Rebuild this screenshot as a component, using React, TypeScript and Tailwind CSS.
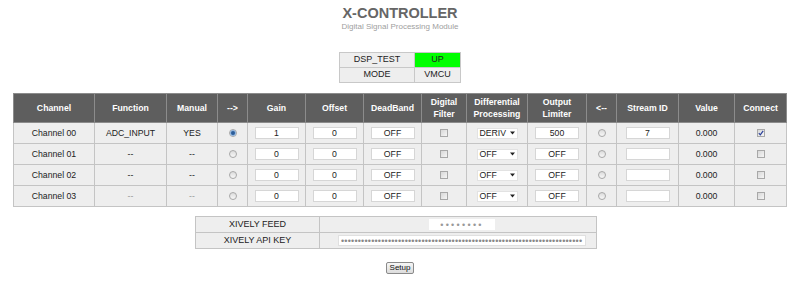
import React from 'react'

const FONT = "font-['Liberation_Sans',Arial,sans-serif]"

const cols = [81, 72, 51, 30, 58, 58, 58, 45, 61, 59, 30, 62, 56, 52]

const headers: React.ReactNode[] = [
  'Channel',
  'Function',
  'Manual',
  '-->',
  'Gain',
  'Offset',
  'DeadBand',
  <>Digital<br />Filter</>,
  <>Differential<br />Processing</>,
  <>Output<br />Limiter</>,
  '<--',
  'Stream ID',
  'Value',
  'Connect',
]

interface Channel {
  name: string
  fn: string
  manual: string
  selected: boolean
  gain: string
  offset: string
  deadband: string
  diff: string
  limiter: string
  stream: string
  value: string
  connect: boolean
  dim?: boolean
}

const channels: Channel[] = [
  { name: 'Channel 00', fn: 'ADC_INPUT', manual: 'YES', selected: true, gain: '1', offset: '0', deadband: 'OFF', diff: 'DERIV', limiter: '500', stream: '7', value: '0.000', connect: true },
  { name: 'Channel 01', fn: '--', manual: '--', selected: false, gain: '0', offset: '0', deadband: 'OFF', diff: 'OFF', limiter: 'OFF', stream: '', value: '0.000', connect: false },
  { name: 'Channel 02', fn: '--', manual: '--', selected: false, gain: '0', offset: '0', deadband: 'OFF', diff: 'OFF', limiter: 'OFF', stream: '', value: '0.000', connect: false },
  { name: 'Channel 03', fn: '--', manual: '--', selected: false, gain: '0', offset: '0', deadband: 'OFF', diff: 'OFF', limiter: 'OFF', stream: '', value: '0.000', connect: false, dim: true },
]

function Radio({ checked }: { checked?: boolean }) {
  return (
    <span className="inline-flex h-[8px] w-[8px] items-center justify-center rounded-full border border-[#a8a8a8] bg-gradient-to-b from-[#dcdcdc] to-[#f8f8f8] align-middle">
      {checked && <span className="h-[4px] w-[4px] rounded-full bg-[#2c5d9a] shadow-[0_0_0_1px_#8fb4de]" />}
    </span>
  )
}

function Check({ checked }: { checked?: boolean }) {
  return (
    <span className="inline-flex h-[8px] w-[8px] items-center justify-center border border-[#a8a8a8] bg-gradient-to-br from-[#d8d8d8] to-[#f6f6f6] align-middle">
      {checked && (
        <svg width="6" height="6" viewBox="0 0 6 6">
          <path d="M0.8 3.2 L2.3 4.8 L5.2 0.8" fill="none" stroke="#2a3f9a" strokeWidth="1.2" />
        </svg>
      )}
    </span>
  )
}

function Field({ value }: { value: string }) {
  return (
    <input
      readOnly
      value={value}
      className="mx-auto block h-[12px] w-[44px] border border-[#d6d6d6] bg-white p-0 text-center text-[8.7px] leading-none text-[#222] outline-none"
    />
  )
}

function Select({ value }: { value: string }) {
  return (
    <span className="mx-auto flex h-[11px] w-[41px] items-center gap-[2px] border border-[#e2e2e2] bg-white pl-[2px] pr-[2px]">
      <span className="flex-1 whitespace-nowrap text-left text-[8.7px] leading-none text-[#222]">{value}</span>
      <svg width="5" height="4" viewBox="0 0 5 4" className="shrink-0">
        <path d="M0 0.5 H5 L2.5 3.5 Z" fill="#222" />
      </svg>
    </span>
  )
}

const td = 'border border-[#c4c4c4] p-0 text-center leading-none'

export default function App() {
  return (
    <div className={`${FONT} min-h-[285px] w-[800px] bg-white`}>
      <div className="pt-[5px] text-center">
        <div className="text-[14.5px] font-bold leading-[16px] text-[#666]">X-CONTROLLER</div>
        <div className="mt-[1px] text-[8px] leading-[10px] text-[#a0a0a0]">Digital Signal Processing Module</div>
      </div>

      <div className="mt-[20px] flex justify-center">
        <table className="border-collapse border border-[#b0b0b0] text-[9px] text-[#222]">
          <tbody>
            <tr className="h-[15px]">
              <td className="w-[75px] border border-[#c8c8c8] bg-[#eeeeee] p-0 text-center">DSP_TEST</td>
              <td className="w-[46px] border border-[#c8c8c8] bg-[#00ff00] p-0 text-center">UP</td>
            </tr>
            <tr className="h-[15px]">
              <td className="border border-[#c8c8c8] bg-[#eeeeee] p-0 text-center">MODE</td>
              <td className="border border-[#c8c8c8] bg-[#eeeeee] p-0 text-center">VMCU</td>
            </tr>
          </tbody>
        </table>
      </div>

      <div className="mt-[10px] flex justify-center">
        <table className="w-[773px] table-fixed border-collapse border border-[#a8a8a8] text-[8.7px]">
          <colgroup>
            {cols.map((w, i) => (
              <col key={i} style={{ width: w }} />
            ))}
          </colgroup>
          <thead>
            <tr className="h-[29px] bg-[#5e5e5e]">
              {headers.map((h, i) => (
                <th key={i} className="border border-[#8c8c8c] p-0 text-center font-bold leading-[12px] text-white">
                  {h}
                </th>
              ))}
            </tr>
          </thead>
          <tbody>
            {channels.map((c) => (
              <tr key={c.name} className="h-[21px] bg-[#eeeeee] text-[#222]">
                <td className={td}>{c.name}</td>
                <td className={`${td} ${c.dim ? 'text-[#999]' : ''}`}>{c.fn}</td>
                <td className={`${td} ${c.dim ? 'text-[#999]' : ''}`}>{c.manual}</td>
                <td className={td}><Radio checked={c.selected} /></td>
                <td className={td}><Field value={c.gain} /></td>
                <td className={td}><Field value={c.offset} /></td>
                <td className={td}><Field value={c.deadband} /></td>
                <td className={td}><Check /></td>
                <td className={td}><Select value={c.diff} /></td>
                <td className={td}><Field value={c.limiter} /></td>
                <td className={td}><Radio /></td>
                <td className={td}><Field value={c.stream} /></td>
                <td className={td}>{c.value}</td>
                <td className={td}><Check checked={c.connect} /></td>
              </tr>
            ))}
          </tbody>
        </table>
      </div>

      <div className="mt-[9px] flex justify-center pr-[8px]">
        <table className="w-[402px] table-fixed border-collapse border border-[#a8a8a8] text-[9px] text-[#222]">
          <colgroup>
            <col style={{ width: 124 }} />
            <col />
          </colgroup>
          <tbody>
            <tr className="h-[16px] bg-[#eeeeee]">
              <td className="border border-[#c4c4c4] p-0 text-center leading-none">XIVELY FEED</td>
              <td className="border border-[#c4c4c4] p-0 pl-[8px] text-center leading-none">
                <input
                  type="password"
                  readOnly
                  value="12345678"
                  className="h-[11px] w-[66px] border-0 bg-white p-0 text-center text-[9px] leading-none tracking-[2.3px] text-[#999] outline-none"
                />
              </td>
            </tr>
            <tr className="h-[16px] bg-[#eeeeee]">
              <td className="border border-[#c4c4c4] p-0 text-center leading-none">XIVELY API KEY</td>
              <td className="border border-[#c4c4c4] p-0 pl-[8px] text-center leading-none">
                <input
                  type="password"
                  readOnly
                  value="abcdefghijklmnopqrstuvwxyzabcdefghijklmnopqrstuvwxyzabcdefghijklmnopqrst"
                  className="h-[11px] w-[248px] border border-[#e0e0e0] bg-white p-0 pl-[2px] text-left text-[9px] leading-none tracking-[0.2px] text-[#888] outline-none"
                />
              </td>
            </tr>
          </tbody>
        </table>
      </div>

      <div className="mt-[13px] flex justify-center">
        <button className="h-[12px] w-[28px] rounded-[2px] border border-[#8a8a8a] bg-gradient-to-b from-[#f6f6f6] to-[#dcdcdc] p-0 text-[8px] leading-none text-[#111]">
          Setup
        </button>
      </div>
    </div>
  )
}
